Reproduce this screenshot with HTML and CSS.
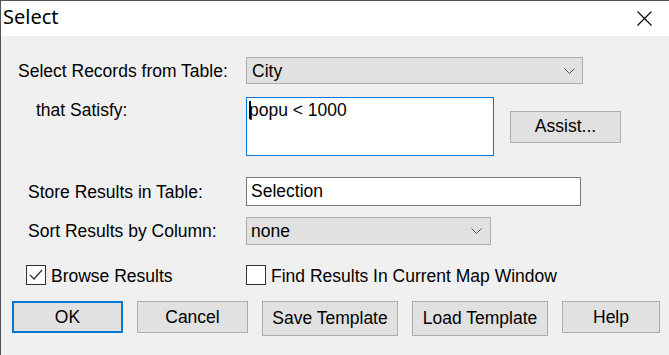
FILE: index.html
```html
<!DOCTYPE html>
<html lang="en">
<head>
    <meta charset="UTF-8">
    <title>Select</title>
    <link rel="stylesheet" href="styles.css">
</head>
<body>

    <!-- Dialog window -->
    <div class="window">
        <!-- Title bar -->
        <div class="titlebar">
            <span class="title">Select</span>
            <svg class="close" width="15" height="15" viewBox="0 0 15 15">
                <path d="M0.5 0.5 L14.5 14.5 M14.5 0.5 L0.5 14.5" stroke="#000" stroke-width="1.1" fill="none"/>
            </svg>
        </div>

        <!-- Form -->
        <div class="dialog-body">
            <div class="row row-table">
                <label class="label">Select Records from Table:</label>
                <div class="combo combo-wide">
                    <span>City</span>
                    <svg class="chevron" width="11" height="6" viewBox="0 0 11 6"><path d="M0.5 0.5 L5.5 5.5 L10.5 0.5" stroke="#555" fill="none"/></svg>
                </div>
            </div>

            <div class="row row-where">
                <label class="label label-indent">that Satisfy:</label>
                <div class="expr"><span class="caret"></span>popu &lt; 1000</div>
                <button class="btn btn-assist">Assist...</button>
            </div>

            <div class="row row-store">
                <label class="label label-mid">Store Results in Table:</label>
                <div class="textbox">Selection</div>
            </div>

            <div class="row row-sort">
                <label class="label label-mid">Sort Results by Column:</label>
                <div class="combo combo-narrow">
                    <span>none</span>
                    <svg class="chevron" width="11" height="6" viewBox="0 0 11 6"><path d="M0.5 0.5 L5.5 5.5 L10.5 0.5" stroke="#555" fill="none"/></svg>
                </div>
            </div>

            <div class="row row-checks">
                <div class="check check-browse">
                    <span class="box">
                        <svg width="14" height="12" viewBox="0 0 14 12"><path d="M1 6 L5 10 L13 1" stroke="#333" stroke-width="1.3" fill="none"/></svg>
                    </span>
                    Browse Results
                </div>
                <div class="check check-find">
                    <span class="box"></span>
                    Find Results In Current Map Window
                </div>
            </div>

            <div class="row buttons">
                <button class="btn btn-ok">OK</button>
                <button class="btn btn-std">Cancel</button>
                <button class="btn btn-tall">Save Template</button>
                <button class="btn btn-tall">Load Template</button>
                <button class="btn btn-help">Help</button>
            </div>
        </div>
    </div>

</body>
</html>
```

FILE: styles.css
```css
/* General Styles */
body {
    margin: 0;
    padding: 0;
    background-color: #f0f0f0;
    font-family: "Liberation Sans", Arial, sans-serif;
    font-size: 17.5px;
    color: #000;
}

/* Window frame */
.window {
    width: 669px;
    height: 355px;
    box-sizing: border-box;
    border-left: 1px solid #4d5660;
    border-top: 1px solid #4d5660;
    background-color: #f0f0f0;
}

.titlebar {
    height: 35px;
    background-color: #fff;
    display: flex;
    justify-content: space-between;
    align-items: flex-start;
}

.title {
    font-family: "Noto Sans", "Open Sans", sans-serif;
    font-size: 20px;
    line-height: 27px;
    margin-left: 2px;
    margin-top: 2px;
}

.close {
    margin-top: 10px;
    margin-right: 17px;
}

/* Form rows */
.dialog-body {
    padding-top: 21px;
}

.row {
    display: flex;
    align-items: center;
}

.label {
    width: 245px;
    box-sizing: border-box;
    padding-left: 17px;
    line-height: 20px;
}

.label-indent {
    padding-left: 35px;
    align-self: flex-start;
    margin-top: 3px;
}

.label-mid {
    padding-left: 27px;
}

.row-where {
    margin-top: 13px;
}

.row-store {
    margin-top: 21px;
}

.row-sort {
    margin-top: 11px;
}

.row-checks {
    margin-top: 19px;
}

.buttons {
    margin-top: 15px;
    align-items: flex-start;
    gap: 14px;
    padding-left: 11px;
}

/* Combo boxes */
.combo {
    display: flex;
    justify-content: space-between;
    align-items: center;
    box-sizing: border-box;
    height: 27px;
    border: 1px solid #adadad;
    background-color: #e1e1e1;
    padding-left: 5px;
    padding-right: 7px;
    line-height: 20px;
}

.combo-wide {
    width: 337px;
}

.combo-narrow {
    width: 245px;
    height: 28px;
    padding-left: 4px;
    padding-right: 8px;
}

/* Text fields */
.expr {
    width: 248px;
    height: 59px;
    box-sizing: border-box;
    border: 1px solid #0078d7;
    background-color: #fff;
    padding-left: 2px;
    padding-top: 2px;
    line-height: 20px;
    position: relative;
}

.caret {
    position: absolute;
    left: 2px;
    top: 3px;
    width: 2px;
    height: 18px;
    background-color: #000;
}

.textbox {
    width: 335px;
    height: 29px;
    box-sizing: border-box;
    border: 1px solid #7a7a7a;
    background-color: #fff;
    padding-left: 4px;
    line-height: 26px;
}

/* Checkboxes */
.check {
    display: flex;
    align-items: center;
    gap: 5px;
    line-height: 20px;
    padding-top: 2px;
}

.check-browse {
    margin-left: 25px;
    width: 220px;
}

.box {
    width: 20px;
    height: 20px;
    box-sizing: border-box;
    border: 1px solid #333;
    background-color: #fff;
    display: flex;
    align-items: center;
    justify-content: center;
    margin-top: -2px;
}

/* Buttons */
.btn {
    font-family: "Liberation Sans", Arial, sans-serif;
    font-size: 17.5px;
    color: #000;
    background-color: #e1e1e1;
    border: 1px solid #adadad;
    box-sizing: border-box;
    padding: 0;
    height: 32px;
}

.btn-assist {
    width: 111px;
    margin-left: 16px;
}

.btn-ok {
    width: 111px;
    border: 2px solid #0078d7;
}

.btn-std {
    width: 111px;
}

.btn-tall {
    width: 136px;
    height: 35px;
}

.btn-help {
    width: 98px;
}
```
